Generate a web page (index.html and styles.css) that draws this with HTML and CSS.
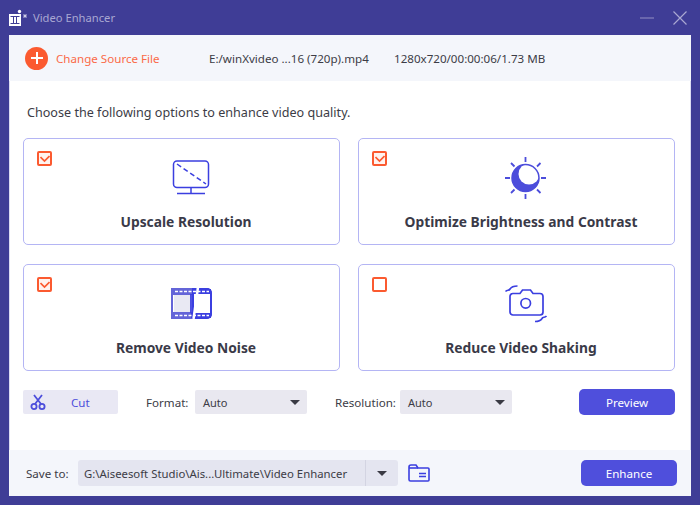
FILE: index.html
```html
<!DOCTYPE html>
<html lang="en">
<head>
  <meta charset="UTF-8" />
  <title>Video Enhancer</title>
  <link rel="stylesheet" href="styles.css">
</head>
<body>
  <div class="app">
    <div class="titlebar">
      <svg class="logo" width="20" height="18" viewBox="0 0 20 18">
        <rect x="0" y="5" width="12" height="12" fill="#fff"/>
        <path d="M1.500 7.500h9M1.500 14.500h9M4.500 8v6M7.500 8v6" stroke="#3f3d96" stroke-width="1" fill="none"/>
        <circle cx="10.500" cy="2.500" r="1.700" fill="#fff"/>
        <path d="M14 7h4M16 5v4M14.500 5.500l3 3M17.500 5.500l-3 3" stroke="#d8d8ee" stroke-width="0.800"/>
      </svg>
      <span class="app-title">Video Enhancer</span>
      <div class="win-btns">
        <svg width="16" height="16" viewBox="0 0 16 16"><path d="M1 8h14" stroke="#8583bd" stroke-width="1.200"/></svg>
        <svg width="16" height="16" viewBox="0 0 16 16"><path d="M1.500 1.500l13 13M14.500 1.500l-13 13" stroke="#a9a8d2" stroke-width="1.200"/></svg>
      </div>
    </div>

    <div class="panel">
      <div class="source-bar">
        <span class="add-btn">
          <svg width="12" height="12" viewBox="0 0 12 12"><path d="M6 0v12M0 6h12" stroke="#fff" stroke-width="2"/></svg>
        </span>
        <span class="change-link">Change Source File</span>
        <span class="file-name">E:/winXvideo ...16 (720p).mp4</span>
        <span class="file-info">1280x720/00:00:06/1.73 MB</span>
      </div>

      <div class="main">
        <p class="intro">Choose the following options to enhance video quality.</p>

        <div class="options">
          <div class="card">
            <span class="check on">
              <svg width="10" height="8" viewBox="0 0 10 8"><path d="M.5 2l4 4 5-5" stroke="#fb5a30" stroke-width="1.700" fill="none"/></svg>
            </span>
            <svg class="card-icon" width="44" height="44" viewBox="0 0 44 44">
              <rect x="4.500" y="5" width="35" height="26.500" rx="3.500" fill="none" stroke="#3b3fe0" stroke-width="1.500"/>
              <path d="M8 8l29 20" stroke="#3b3fe0" stroke-width="1.500" stroke-dasharray="5 3" fill="none"/>
              <path d="M22 32v5M8 37.500h28" stroke="#3b3fe0" stroke-width="1.500" fill="none"/>
            </svg>
            <div class="card-title">Upscale Resolution</div>
          </div>

          <div class="card">
            <span class="check on">
              <svg width="10" height="8" viewBox="0 0 10 8"><path d="M.5 2l4 4 5-5" stroke="#fb5a30" stroke-width="1.700" fill="none"/></svg>
            </span>
            <svg class="card-icon" width="44" height="44" viewBox="0 0 44 44">
              <circle cx="21.500" cy="22" r="13.500" fill="#4c4ddb"/>
              <circle cx="25" cy="18" r="10.500" fill="#fff"/>
              <circle cx="21.500" cy="22" r="13.500" fill="none" stroke="#4c4ddb" stroke-width="1.500"/>
              <path d="M21.500 1v5M21.500 38v5M1 22h5M37 22h5M7 7l3.500 3.500M36.500 7L33 10.500M7 37l3.500-3.500M36.500 37L33 33.500" stroke="#4c4ddb" stroke-width="1.800" fill="none"/>
            </svg>
            <div class="card-title">Optimize Brightness and Contrast</div>
          </div>

          <div class="card">
            <span class="check on">
              <svg width="10" height="8" viewBox="0 0 10 8"><path d="M.5 2l4 4 5-5" stroke="#fb5a30" stroke-width="1.700" fill="none"/></svg>
            </span>
            <svg class="card-icon" width="44" height="44" viewBox="0 0 44 44">
              <g transform="translate(0 2)">
                <rect x="5" y="10" width="17" height="19" fill="#e9e9f3"/>
                <path d="M24 5H7a4 4 0 0 0-4 4v21a4 4 0 0 0 4 4h17zM3 5h21v5H3zM3 29h21v5H3z" fill="none" stroke="#6465d8" stroke-width="2"/>
                <rect x="3" y="5" width="21" height="5" fill="#6465d8"/>
                <rect x="3" y="29" width="21" height="5" fill="#6465d8"/>
                <rect x="3" y="5" width="39" height="29" rx="4" fill="none" stroke="#6465d8" stroke-width="2"/>
                <path d="M24 5h14a4 4 0 0 1 4 4v21a4 4 0 0 1-4 4H24z" fill="none" stroke="#3b3fe0" stroke-width="2"/>
                <rect x="24" y="5" width="18" height="5" fill="#3b3fe0"/>
                <rect x="22" y="29" width="20" height="5" fill="#3b3fe0"/>
                <path d="M22 10v19" stroke="#3b3fe0" stroke-width="1.800"/>
                <path d="M6 7.500h34M6 31.500h34" stroke="#fff" stroke-width="1.500" stroke-dasharray="3 1.500" fill="none"/>
                <path d="M24.500 35l4.500-32" stroke="#fff" stroke-width="2.500" fill="none"/>
              </g>
            </svg>
            <div class="card-title">Remove Video Noise</div>
          </div>

          <div class="card">
            <span class="check"></span>
            <svg class="card-icon" width="44" height="44" viewBox="0 0 44 44">
              <g transform="translate(0 2)">
                <path d="M9 9.500h7l2.500-3.500h8l2.500 3.500h7a3 3 0 0 1 3 3V28a3 3 0 0 1-3 3H9a3 3 0 0 1-3-3V12.500a3 3 0 0 1 3-3z" fill="none" stroke="#3b3fe0" stroke-width="1.700"/>
                <circle cx="21.700" cy="19.300" r="4.800" fill="none" stroke="#3b3fe0" stroke-width="1.700"/>
                <path d="M1.500 7.500c2-2 3.500-.5 4.500-2.500 1.200-2 4-3 7.500-3M42.500 32c-2 2-3.500 .5-4.500 2.500-1.200 2-4 3-7 3" fill="none" stroke="#3b3fe0" stroke-width="1.700"/>
              </g>
            </svg>
            <div class="card-title">Reduce Video Shaking</div>
          </div>
        </div>

        <div class="controls">
          <div class="cut-btn">
            <svg width="16" height="16" viewBox="0 0 16 16">
              <circle cx="4" cy="12.500" r="2.600" fill="none" stroke="#4c4ddb" stroke-width="1.800"/>
              <circle cx="12" cy="12.500" r="2.600" fill="none" stroke="#4c4ddb" stroke-width="1.800"/>
              <path d="M5 10L12 1M11 10L4 1" stroke="#4c4ddb" stroke-width="1.800" fill="none"/>
            </svg>
            <span class="cut-label">Cut</span>
          </div>
          <label class="field-label format-label">Format:</label>
          <div class="select"><span>Auto</span><i class="arrow"></i></div>
          <label class="field-label res-label">Resolution:</label>
          <div class="select"><span>Auto</span><i class="arrow"></i></div>
          <button class="primary preview-btn">Preview</button>
        </div>
      </div>

      <div class="footer">
        <label class="field-label save-label">Save to:</label>
        <div class="path-box">
          <span class="path-text">G:\Aiseesoft Studio\Ais...Ultimate\Video Enhancer</span>
          <span class="path-drop"><i class="arrow"></i></span>
        </div>
        <svg class="folder" width="22" height="18" viewBox="0 0 22 18">
          <path d="M1 15.500V3a2 2 0 0 1 2-2h5l2 3h10a1 1 0 0 1 1 1v11a1 1 0 0 1-1 1H2.500A1.500 1.500 0 0 1 1 15.500z" fill="none" stroke="#3b3fe0" stroke-width="1.600"/>
          <path d="M1 4h9" stroke="#3b3fe0" stroke-width="1.600"/>
          <path d="M11 9.500h7M11 12.500h7" stroke="#3b3fe0" stroke-width="1.400"/>
        </svg>
        <button class="primary enhance-btn">Enhance</button>
      </div>
    </div>
  </div>
</body>
</html>
```

FILE: styles.css
```css
* {
  box-sizing: border-box;
}

body {
  margin: 0;
  font-family: "Noto Sans", sans-serif;
  font-size: 11.6px;
  color: #3c3c46;
}

.app {
  width: 700px;
  height: 505px;
  background: #3f3d96;
  display: flex;
  flex-direction: column;
}

.titlebar {
  height: 35px;
  flex: none;
  display: flex;
  align-items: center;
  padding: 0 12px 0 9px;
}

.logo {
  margin-top: 1px;
}

.app-title {
  margin-left: 4px;
  color: #a9a8d2;
  font-size: 11.2px;
}

.win-btns {
  margin-left: auto;
  display: flex;
  gap: 17px;
}

/* Panel */
.panel {
  flex: 1;
  margin: 0 9px 9px;
  background: #fff;
  display: flex;
  flex-direction: column;
  box-shadow: 0 0 0 1px #dcdcf2 inset;
}

.source-bar {
  height: 46px;
  flex: none;
  background: #f4f6fb;
  display: flex;
  align-items: center;
  padding-left: 16px;
}

.add-btn {
  width: 23px;
  height: 23px;
  border-radius: 50%;
  background: #fb5a30;
  display: flex;
  align-items: center;
  justify-content: center;
}

.change-link {
  margin-left: 8px;
  width: 153px;
  color: #fb6a47;
}

.file-name {
  width: 185px;
}

.main {
  flex: 1;
  padding: 0 16px 0 14px;
}

.intro {
  margin: 0;
  height: 57px;
  padding: 22px 0 0 4px;
  font-size: 12.6px;
  line-height: 19px;
}

/* Option cards */
.options {
  display: grid;
  grid-template-columns: 317px 317px;
  grid-auto-rows: 107px;
  column-gap: 18px;
  row-gap: 19px;
}

.card {
  position: relative;
  border: 1px solid #b4b5f4;
  border-radius: 5px;
  display: flex;
  flex-direction: column;
  align-items: center;
  padding: 17px 0 0 18px;
}

.card-title {
  margin: 12px 0 0 -9px;
  text-align: center;
  font-size: 13.8px;
  font-weight: 700;
  line-height: 19px;
  color: #3a3a48;
}

.check {
  position: absolute;
  left: 13px;
  top: 12px;
  width: 15px;
  height: 15px;
  border: 2px solid #fb5a30;
  border-radius: 2px;
  display: flex;
  align-items: center;
  justify-content: center;
}

.check.on {
  background: #fff3ef;
}

/* Controls row */
.controls {
  margin-top: 18px;
  height: 26px;
  display: flex;
  align-items: center;
}

.cut-btn {
  width: 95px;
  height: 24px;
  background: #e9e8f4;
  border-radius: 2px;
  display: flex;
  align-items: center;
  padding-left: 7px;
}

.cut-label {
  margin-left: 25px;
  color: #4c4ddb;
}

.format-label {
  margin-left: 28px;
  width: 49px;
}

.res-label {
  margin-left: 28px;
  width: 65px;
}

.select {
  width: 112px;
  height: 24px;
  background: #e9e8f0;
  border-radius: 2px;
  display: flex;
  align-items: center;
  justify-content: space-between;
  padding: 0 7px 0 8px;
  font-size: 11px;
}

.arrow {
  display: block;
  width: 0;
  height: 0;
  border-left: 5px solid transparent;
  border-right: 5px solid transparent;
  border-top: 5px solid #3a3a44;
}

.primary {
  width: 96px;
  height: 26px;
  border: none;
  border-radius: 5px;
  background: #4f4fdc;
  color: #fff;
  font-family: inherit;
  font-size: 11.6px;
  padding: 0;
}

.preview-btn {
  margin-left: 67px;
}

/* Footer */
.footer {
  height: 46px;
  flex: none;
  background: #f4f6fb;
  display: flex;
  align-items: center;
  padding-left: 17px;
}

.save-label {
  width: 52px;
}

.path-box {
  width: 320px;
  height: 26px;
  background: #e4e5f0;
  border-radius: 3px;
  display: flex;
  align-items: center;
  font-size: 11.35px;
}

.path-text {
  flex: 1;
  padding-left: 6px;
}

.path-drop {
  width: 33px;
  height: 26px;
  border-left: 1px solid #d3d4e2;
  display: flex;
  align-items: center;
  justify-content: center;
}

.folder {
  margin-left: 10px;
}

.enhance-btn {
  margin-left: 151px;
}
```
